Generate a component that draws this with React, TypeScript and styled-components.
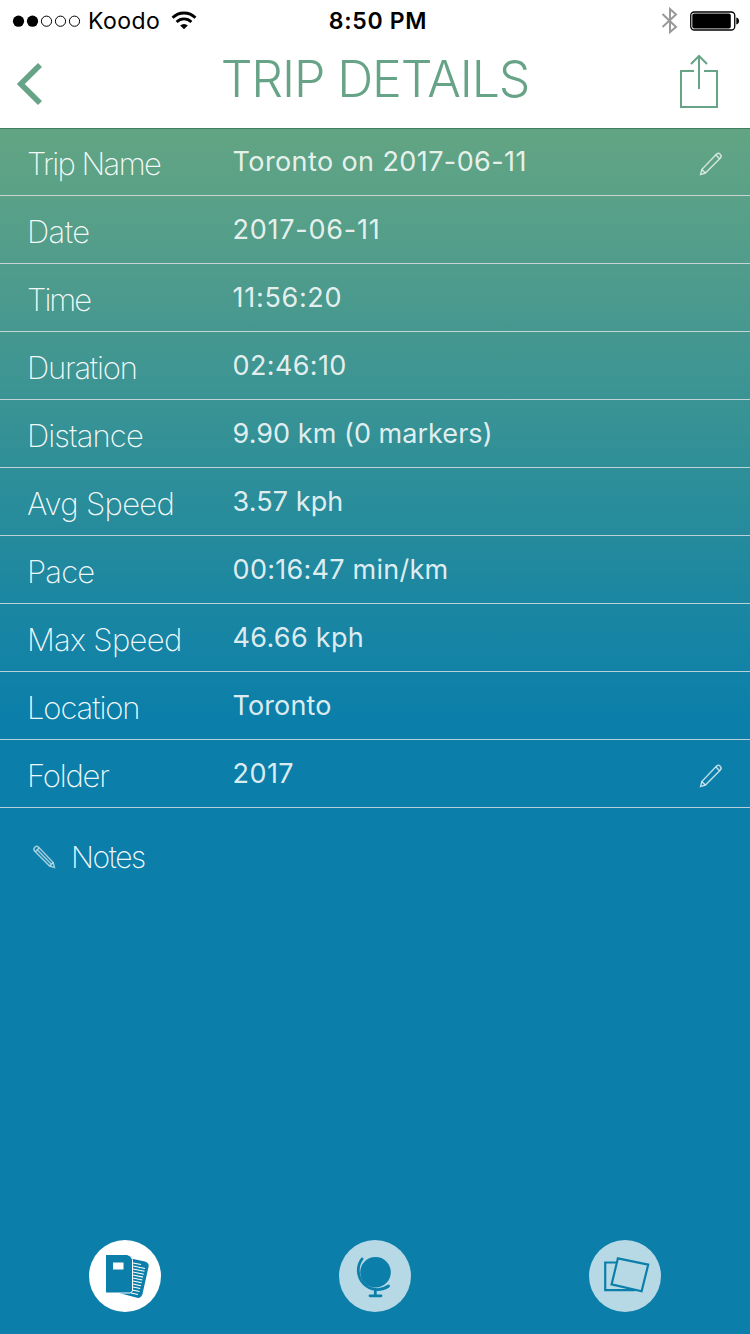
import React from "react";
import styled, { createGlobalStyle } from "styled-components";

const GREEN = "#66a387";
const BLUE = "#0b7faa";

const GlobalStyle = createGlobalStyle`
  body { margin: 0; background: ${BLUE}; }
  * { box-sizing: border-box; }
`;

const Screen = styled.div`
  width: 750px;
  height: 1334px;
  display: flex;
  flex-direction: column;
  overflow: hidden;
  font-family: Inter, "Liberation Sans", sans-serif;
  background: ${BLUE};
`;

const Header = styled.header`
  height: 129px;
  flex: none;
  background: #fff;
  border-bottom: 1px solid #3f7c62;
`;

const StatusBar = styled.div`
  height: 40px;
  display: grid;
  grid-template-columns: 1fr auto 1fr;
  align-items: center;
  padding: 0 10px 0 12px;
  color: #000;
  font-size: 23px;
  line-height: 40px;
`;

const StatusGroup = styled.div<{ $end?: boolean }>`
  display: flex;
  align-items: center;
  height: 40px;
  justify-content: ${(p) => (p.$end ? "flex-end" : "flex-start")};
  gap: ${(p) => (p.$end ? "11px" : "0")};
`;

const Carrier = styled.span`
  margin: 1px 11px 0 7px;
  letter-spacing: 0.45px;
`;

const Clock = styled.span`
  font-weight: 600;
  padding: 1px 0 0 4px;
  letter-spacing: 0.7px;
`;

const TitleBar = styled.div`
  height: 88px;
  display: grid;
  grid-template-columns: 60px 1fr 60px;
  padding: 0 15px;
`;

const Title = styled.h1`
  margin: 0;
  text-align: center;
  font-size: 50px;
  line-height: 78px;
  font-weight: 300;
  letter-spacing: -1.1px;
  white-space: nowrap;
  color: ${GREEN};
`;

const Content = styled.main`
  flex: 1;
  display: flex;
  flex-direction: column;
  background: linear-gradient(#62a583 0, #509c8c 140px, #2e8f98 340px, ${BLUE} 590px);
`;

const Row = styled.div`
  height: 68px;
  display: flex;
  border-bottom: 1px solid rgba(228, 226, 230, 0.8);
  padding-left: 27px;

  &:first-child {
    height: 67px;
  }
  &:first-child > * {
    margin-top: -1px;
  }
`;

const Label = styled.span<{ $track: number }>`
  width: 205.6px;
  font-size: 31px;
  line-height: 71px;
  font-weight: 200;
  letter-spacing: ${(p) => p.$track}px;
  white-space: nowrap;
  color: rgba(255, 255, 255, 0.95);
`;

const Value = styled.span<{ $track: number }>`
  flex: 1;
  font-size: 27px;
  line-height: 68px;
  letter-spacing: ${(p) => p.$track}px;
  white-space: nowrap;
  color: rgba(255, 255, 255, 0.87);
`;

const EditSlot = styled.span`
  width: 52px;
  height: 67px;
  display: flex;
  align-items: center;
  padding-top: 5px;
`;

const NotesRow = styled.div`
  height: 98px;
  display: flex;
  align-items: center;
  padding-left: 31px;
`;

const NotesLabel = styled.span`
  margin-left: 14px;
  font-size: 30px;
  font-weight: 200;
  letter-spacing: -1.4px;
  color: rgba(255, 255, 255, 0.95);
`;

const TabBar = styled.nav`
  margin-top: auto;
  height: 94px;
  display: grid;
  grid-template-columns: repeat(3, 1fr);
  justify-items: center;
`;

const Tab = styled.div<{ $active?: boolean }>`
  width: 72px;
  height: 72px;
  border-radius: 50%;
  background: ${(p) => (p.$active ? "#fff" : "#b7d8e5")};
`;

const Signal = () => (
  <svg width="69" height="14" viewBox="0 0 69 14">
    {[0, 1, 2, 3, 4].map((i) => (
      <circle key={i} cx={6.5 + i * 14} cy="7.2" r={i < 2 ? 5.6 : 5.1} fill={i < 2 ? "#000" : "none"} stroke={i < 2 ? "none" : "#000"} strokeWidth="1" />
    ))}
  </svg>
);

const Wifi = () => (
  <svg width="26" height="20" viewBox="0 0 26 20" fill="none" stroke="#000">
    <path d="M1.6 6.7A16.2 16.2 0 0 1 24.4 6.7" strokeWidth="3" />
    <path d="M5.6 10.9A10.5 10.5 0 0 1 20.4 10.9" strokeWidth="2.8" />
    <path d="M9.2 14.5A5.4 5.4 0 0 1 16.8 14.5L13 18.3Z" fill="#000" stroke="none" />
  </svg>
);

const Bluetooth = () => (
  <svg width="18" height="28" viewBox="0 0 18 28" fill="none" stroke="#999" strokeWidth="2">
    <path d="M1.5 7L15 20L9 25V2L15 7.500L1.5 20" />
  </svg>
);

const Battery = () => (
  <svg width="50" height="20" viewBox="0 0 50 20">
    <rect x="0.75" y="1" width="44" height="18" rx="3.5" fill="none" stroke="#000" strokeWidth="1.3" />
    <rect x="2.3" y="2.5" width="38.5" height="15" rx="2" />
    <path d="M46.3 6.5Q49 7.200 49 10Q49 12.800 46.3 13.500Z" />
  </svg>
);

const Back = () => (
  <svg width="30" height="88" viewBox="0 0 30 88" fill="none" stroke={GREEN} strokeWidth="5.6">
    <path d="M25 25L5.8 44L25 63" />
  </svg>
);

const Share = () => (
  <svg width="60" height="88" viewBox="675 40 60 88" fill="none" stroke={GREEN} strokeWidth="2">
    <path d="M694 71H681V107H717V71H704M699 89V57M691 64L699 56L707 64" />
  </svg>
);

const Pencil = ({ flip }: { flip?: boolean }) => (
  <svg width="26" height="26" viewBox="0 0 26 26" fill="none" stroke="#fff" strokeOpacity={flip ? 0.6 : 0.7} strokeWidth="1.5">
    <g transform={flip ? "translate(26 0) scale(-1 1)" : undefined}>
      <path d="M2.6 23.4L3.8 18.6L18.6 3Q20.4 1.4 22.2 3.2T22.4 7L7.4 22Z" />
      <path d="M3.8 18.6L7.4 22M17.8 3.8L21.6 7.8" />
      {flip && <path d="M5.6 20.3L19.6 5.9" />}
    </g>
  </svg>
);

const Journal = () => (
  <svg width="72" height="72" viewBox="0 0 72 72">
    <path d="M42 18.5L56 21.5Q60.5 23 59.5 27L53.5 54Q52 58.5 48 57.8L30 53Z" fill={BLUE} />
    <path d="M16.5 14.5H38Q42.5 15.5 43.5 19.5V50.5Q43 53 40.5 53H16.5Z" fill={BLUE} stroke="#fff" strokeWidth="1" />
    <path d="M24 22.5H34.5V29.5H24Z" fill="#fff" />
    <path d="M44 23l8 1.5M44 26l12 2.5M44 29l11.5 2.3M44 32l10.8 2.2M44 35l10 2.1M44 38l9.4 2M44 41l8.700 1.8M44 44l8 1.7M44 47l7.2 1.5M43 50l7.5 1.5M42 53l7 1.5" stroke="#fff" strokeWidth="1.1" />
  </svg>
);

const Globe = () => (
  <svg width="72" height="72" viewBox="0 0 72 72" fill="none" stroke={BLUE} strokeLinecap="round">
    <circle cx="36.5" cy="32.2" r="15.3" fill={BLUE} stroke="none" />
    <path d="M23 19A19.2 19.2 0 0 0 49.6 46" strokeWidth="2.8" />
    <path d="M36.3 51V55.5M31 55.8H42" strokeWidth="2.8" />
  </svg>
);

const Photos = () => (
  <svg width="72" height="72" viewBox="0 0 72 72" fill="none" stroke={BLUE} strokeWidth="2.2">
    <path d="M27 22.5H16.2V50.2H46" />
    <path d="M28.9 18.3L59.2 24.7L52.6 51.3L22.6 44.4Z" />
  </svg>
);

const rows = [
  { label: "Trip Name", value: "Toronto on 2017-06-11", labelTrack: -1.6, valueTrack: 0.4, edit: true },
  { label: "Date", value: "2017-06-11", labelTrack: -0.6, valueTrack: 0.75 },
  { label: "Time", value: "11:56:20", labelTrack: -2, valueTrack: 0.68 },
  { label: "Duration", value: "02:46:10", labelTrack: -1.2, valueTrack: 0.36 },
  { label: "Distance", value: "9.90 km (0 markers)", labelTrack: -0.9, valueTrack: 0.04 },
  { label: "Avg Speed", value: "3.57 kph", labelTrack: -0.7, valueTrack: 0.08 },
  { label: "Pace", value: "00:16:47 min/km", labelTrack: -0.8, valueTrack: 0.26 },
  { label: "Max Speed", value: "46.66 kph", labelTrack: -0.7, valueTrack: 0.3 },
  { label: "Location", value: "Toronto", labelTrack: -1.1, valueTrack: 0.1 },
  { label: "Folder", value: "2017", labelTrack: -1.2, valueTrack: 0.4, edit: true },
];

export default function App() {
  return (
    <Screen>
      <GlobalStyle />
      <Header>
        <StatusBar>
          <StatusGroup>
            <Signal />
            <Carrier>Koodo</Carrier>
            <Wifi />
          </StatusGroup>
          <Clock>8:50 PM</Clock>
          <StatusGroup $end>
            <Bluetooth />
            <Battery />
          </StatusGroup>
        </StatusBar>
        <TitleBar>
          <Back />
          <Title>TRIP DETAILS</Title>
          <Share />
        </TitleBar>
      </Header>
      <Content>
        {rows.map((r) => (
          <Row key={r.label}>
            <Label $track={r.labelTrack}>{r.label}</Label>
            <Value $track={r.valueTrack}>{r.value}</Value>
            {r.edit && (
              <EditSlot>
                <Pencil />
              </EditSlot>
            )}
          </Row>
        ))}
        <NotesRow>
          <Pencil flip />
          <NotesLabel>Notes</NotesLabel>
        </NotesRow>
        <TabBar>
          <Tab $active>
            <Journal />
          </Tab>
          <Tab>
            <Globe />
          </Tab>
          <Tab>
            <Photos />
          </Tab>
        </TabBar>
      </Content>
    </Screen>
  );
}
